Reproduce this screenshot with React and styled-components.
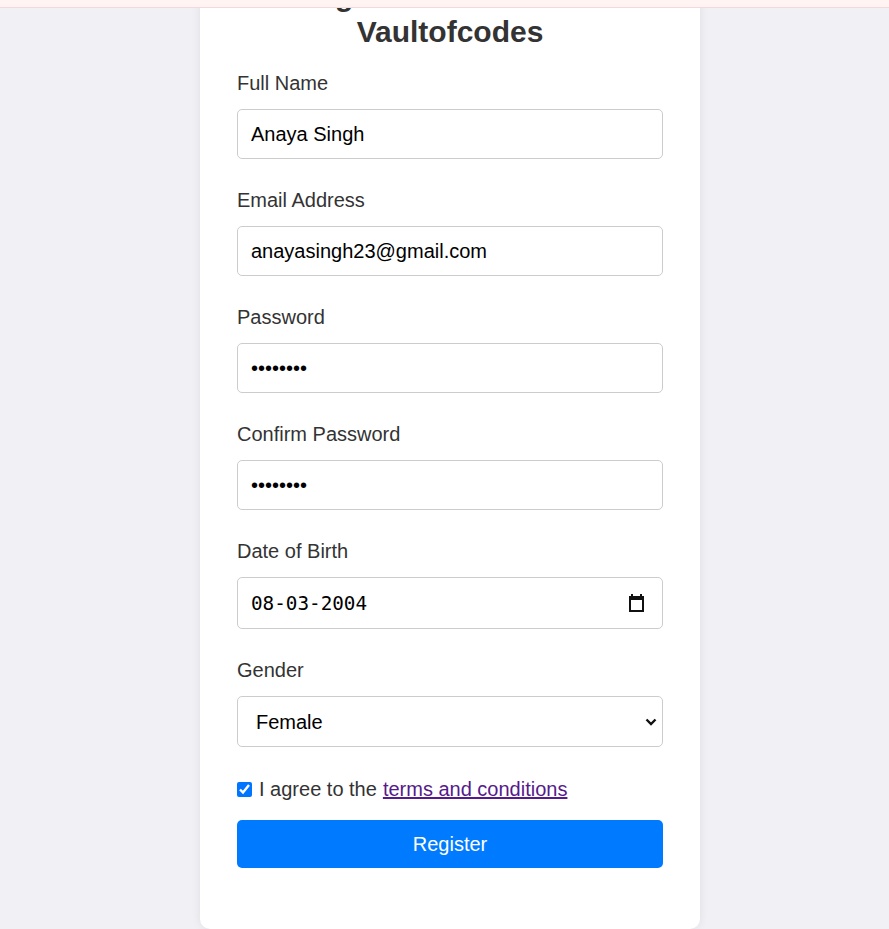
import { useLayoutEffect } from "react";
import styled, { createGlobalStyle } from "styled-components";

const GlobalStyle = createGlobalStyle`
  html, body {
    margin: 0;
    padding: 0;
  }
  body {
    background: #f0f0f5;
    font-family: "Liberation Sans", Arial, sans-serif;
  }
`;

const TopBar = styled.div`
  position: fixed;
  top: 0;
  left: 0;
  right: 0;
  height: 7px;
  background: #fff4f2;
  border-bottom: 1px solid #f3dada;
  z-index: 10;
`;

const Page = styled.div`
  display: flex;
  justify-content: center;
  padding: 40px 0 0 11px;
`;

const Card = styled.div`
  width: 500px;
  box-sizing: border-box;
  background: #fff;
  padding: 37px 37px 61px;
  border-radius: 10px;
  box-shadow: 0 0 10px rgba(0, 0, 0, 0.08);
`;

const Title = styled.h2`
  margin: 0 0 22px;
  font-size: 30px;
  line-height: 36px;
  font-weight: bold;
  text-align: center;
  color: #333;
`;

const Field = styled.div`
  margin-bottom: 30px;
`;

const Label = styled.label`
  display: block;
  font-size: 20px;
  line-height: 23px;
  color: #333;
  margin-bottom: 14px;
`;

const Input = styled.input`
  display: block;
  width: 100%;
  height: ${(p) => p.$h || 50}px;
  box-sizing: border-box;
  border: 1px solid #ccc;
  border-radius: 5px;
  padding: 0 13px;
  font-family: ${(p) => (p.$mono ? '"DejaVu Sans Mono", monospace' : "inherit")};
  font-size: ${(p) => (p.$mono ? "19.3px" : "20px")};
  color: #000;
  background: #fff;
  outline: none;
`;

const Wrap = styled.div`
  position: relative;
`;

const Overlay = styled.span`
  position: absolute;
  right: ${(p) => p.$right}px;
  top: 50%;
  transform: translateY(-50%);
  display: flex;
  pointer-events: none;
`;

const Select = styled.select`
  display: block;
  width: 100%;
  height: 51px;
  box-sizing: border-box;
  border: 1px solid #ccc;
  border-radius: 5px;
  padding: 0 18px;
  font-family: inherit;
  font-size: 20px;
  color: #000;
  background: #fff;
  appearance: none;
  outline: none;
`;

const Agree = styled.div`
  display: flex;
  align-items: center;
  font-size: 20px;
  line-height: 24px;
  color: #333;
  margin-bottom: 19px;
`;

const Check = styled.input`
  width: 15px;
  height: 15px;
  margin: 0 7px 0 0;
  accent-color: #0075ff;
`;

const Terms = styled.a`
  color: #551a8b;
  text-decoration: underline;
  margin-left: 6px;
`;

const Button = styled.button`
  display: block;
  width: 100%;
  height: 48px;
  border: 0;
  border-radius: 5px;
  background: #007bff;
  color: #fff;
  font-family: inherit;
  font-size: 20px;
  cursor: pointer;
`;

function CalendarIcon() {
  return (
    <svg width="17" height="18" viewBox="0 0 17 18" fill="#111">
      <path d="M3 0h2v3H3zM12 0h2v3h-2z" />
      <path d="M1 2h15v16H1zM3 6v10h11V6z" fillRule="evenodd" />
    </svg>
  );
}

function Chevron() {
  return (
    <svg width="12" height="8" viewBox="0 0 12 8" fill="none" stroke="#111" strokeWidth="2.4">
      <path d="M1.5 1.5 6 6l4.5-4.5" />
    </svg>
  );
}

export default function App() {
  useLayoutEffect(() => {
    window.scrollTo(0, document.documentElement.scrollHeight);
  }, []);

  return (
    <>
      <GlobalStyle />
      <TopBar />
      <Page>
        <Card>
          <Title>Registration Form for Vaultofcodes</Title>
          <Field>
            <Label>Full Name</Label>
            <Input type="text" defaultValue="Anaya Singh" />
          </Field>
          <Field>
            <Label>Email Address</Label>
            <Input type="email" defaultValue="anayasingh23@gmail.com" />
          </Field>
          <Field>
            <Label>Password</Label>
            <Input type="password" defaultValue="password" />
          </Field>
          <Field>
            <Label>Confirm Password</Label>
            <Input type="password" defaultValue="password" />
          </Field>
          <Field>
            <Label>Date of Birth</Label>
            <Wrap>
              <Input type="text" $mono $h={52} defaultValue="08-03-2004" />
              <Overlay $right={18}>
                <CalendarIcon />
              </Overlay>
            </Wrap>
          </Field>
          <Field>
            <Label>Gender</Label>
            <Wrap>
              <Select defaultValue="Female">
                <option>Select</option>
                <option>Male</option>
                <option>Female</option>
                <option>Other</option>
              </Select>
              <Overlay $right={6}>
                <Chevron />
              </Overlay>
            </Wrap>
          </Field>
          <Agree>
            <Check type="checkbox" defaultChecked />
            I agree to the
            <Terms href="#">terms and conditions</Terms>
          </Agree>
          <Button>Register</Button>
        </Card>
      </Page>
    </>
  );
}
